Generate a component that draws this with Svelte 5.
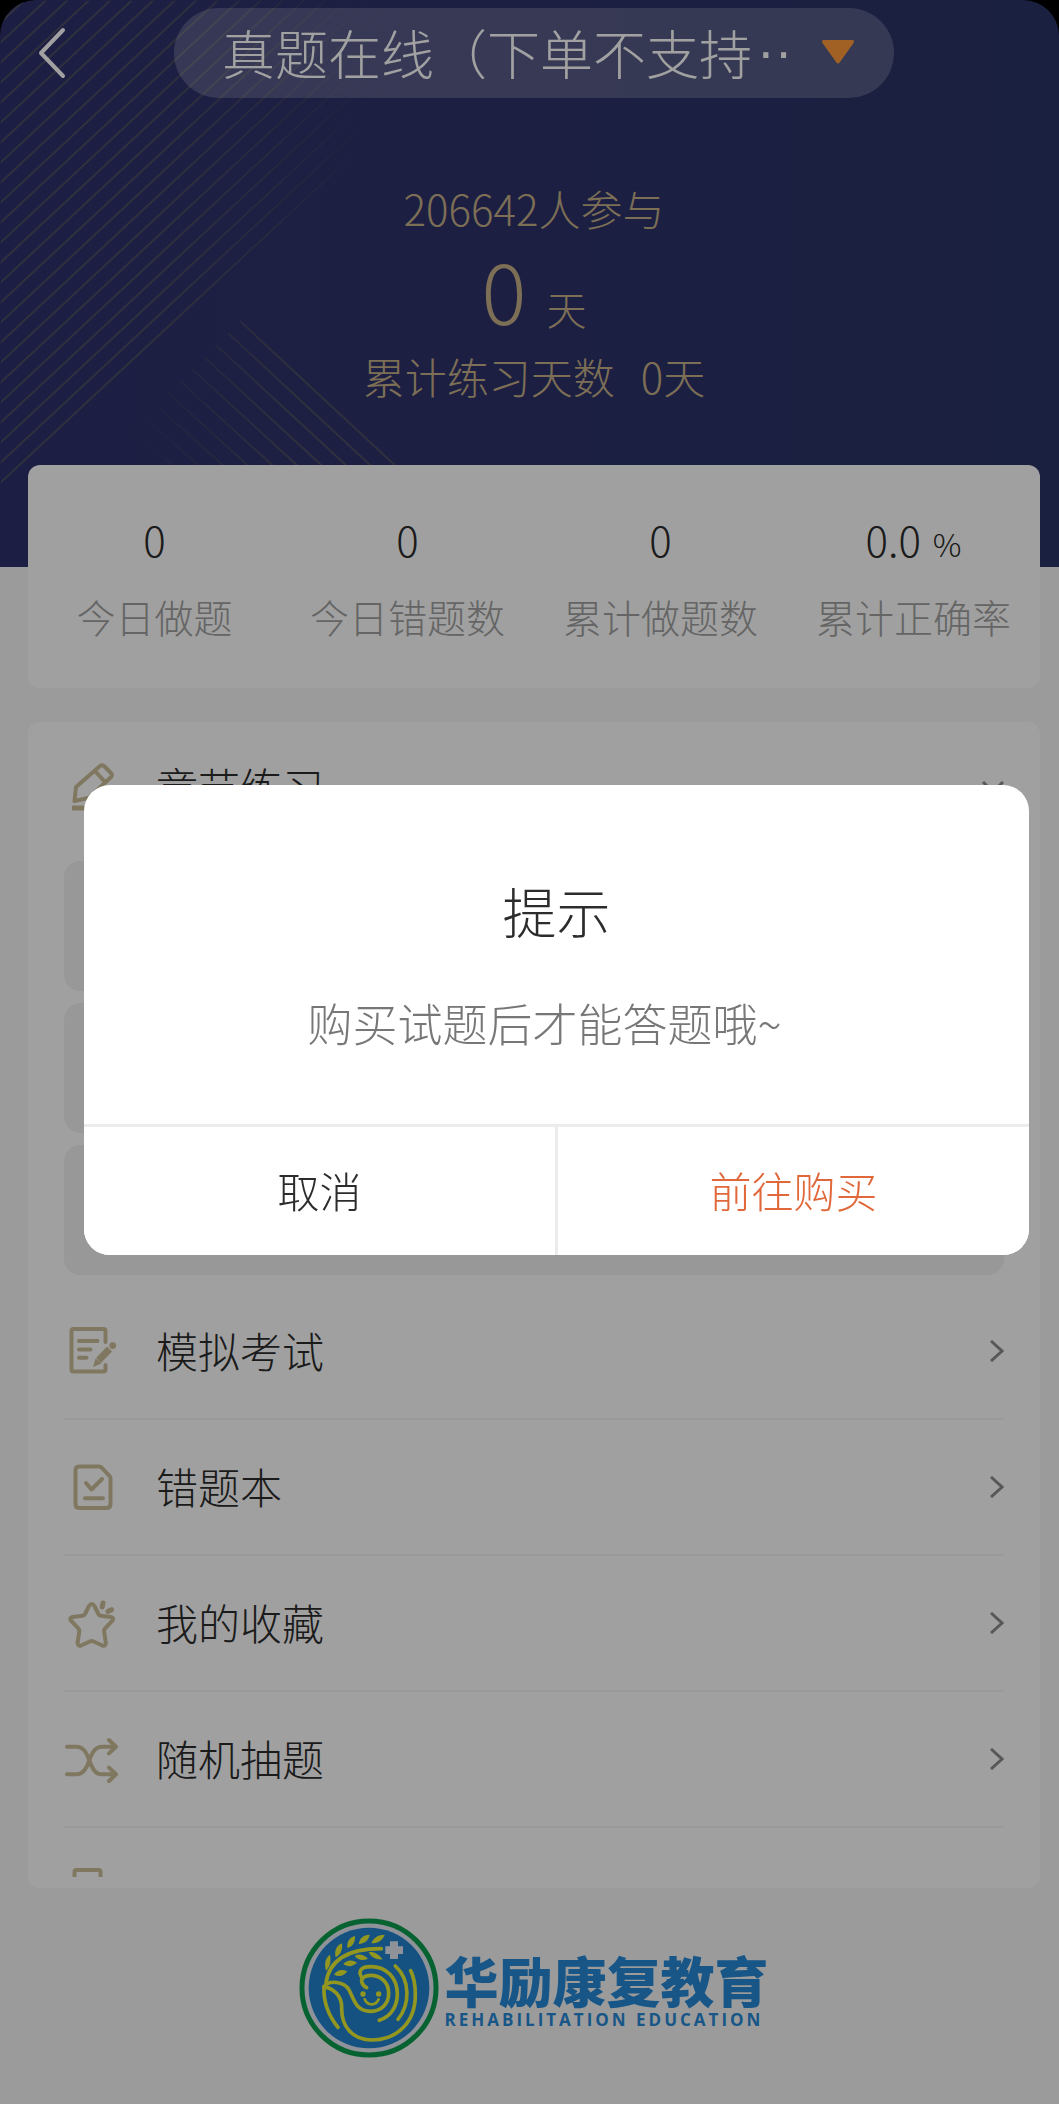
<script lang="ts">
  let open = $state(true);

  const stats = [
    { value: '0', unit: '', label: '今日做题' },
    { value: '0', unit: '', label: '今日错题数' },
    { value: '0', unit: '', label: '累计做题数' },
    { value: '0.0', unit: '%', label: '累计正确率' }
  ];

  const menu = [
    { id: 'exam', label: '模拟考试' },
    { id: 'wrong', label: '错题本' },
    { id: 'star', label: '我的收藏' },
    { id: 'random', label: '随机抽题' }
  ];

  const chapters = [1, 2, 3];
  const rising = Array.from({ length: 24 }, (_, i) => 23 + i * 20);
  const falling = Array.from({ length: 10 }, (_, i) => i);
</script>

{#snippet icon(id: string)}
  <svg class="icon" viewBox="0 0 56 56" aria-hidden="true">
    {#if id === 'chapter'}
      <path d="M12 27 36 6q2-1.500 4 0l7 7q2 2 0 4L27 36q-2 2-5 2.500L10.500 41z" />
      <path d="m31 11 10 11" />
      <path d="M8 48h41" stroke-width="5" stroke-linecap="butt" />
    {:else if id === 'exam'}
      <path d="M41.500 19V8q0-2-2-2h-30q-2 0-2 2v38.500q0 2 2 2h30q2 0 2-2V42" />
      <path d="M15 18h18.500M15 26.500h11.500M15 34.700h7.500" />
      <path d="m34.500 37.500 11-11.500" stroke-width="7" stroke-linecap="butt" />
      <path class="solid" d="M31.500 35.500 37.500 40.500l-8.500 3.500z" stroke="none" />
      <circle class="solid" cx="48.700" cy="22.600" r="3.400" stroke="none" />
    {:else if id === 'wrong'}
      <path d="M15 7.500h20q1.500 0 2.500 1l8 8.500q1 1 1 2.500V45q0 4-4 4h-27q-4 0-4-4V11.500q0-4 3.500-4z" />
      <path d="m22 24 5.500 6.500L38 20M21 39.300h18" />
    {:else if id === 'star'}
      <path d="M25 11q2.700-4 5.400 0l4 8q.8 1.500 2.500 1.700l10 1.300q3.500 1 1.500 3.700l-7.500 8q-1 1-.8 2.500l1.700 11.500q0 4-3.500 2.800l-9.200-4.200q-1.400-.6-2.800 0l-9.200 4.200q-3.500 1-3.500-2.800l1.700-11.500q.2-1.500-.8-2.500l-7.500-8q-2-2.700 1.500-3.700l10-1.300q1.700-.2 2.500-1.700z" />
      <path d="m39 8-.8 4M44 16.500l3.500-1.800" stroke-width="5" />
    {:else if id === 'random'}
      <path d="M3 15.700h9.500C20 15.700 23 23 25.300 29.300 28 37 31 43.300 38 43.300h13M3 43.300h9.500C20 43.300 23 36 25.300 29.300 28 22 31 15.700 38 15.700h13" />
      <path d="m45 9 7 6.700-7 6.700M45 36.600l7 6.700-7 6.700" />
    {:else}
      <path d="M10.500 30V5q0-2 2-2h22q2 0 2 2v25" />
    {/if}
  </svg>
{/snippet}

<div class="page">
  <div class="top">
    <header>
      <svg class="lines" viewBox="0 0 420 567" aria-hidden="true">
        <defs>
          <linearGradient id="fade" x1="0" x2="1" y1="0" y2="0">
            <stop offset="0.400" stop-color="#fff" />
            <stop offset="0.920" stop-color="#fff" stop-opacity="0" />
          </linearGradient>
          <linearGradient id="fadeBack" x1="0" x2="1" y1="0" y2="0">
            <stop offset="0.300" stop-color="#fff" stop-opacity="0" />
            <stop offset="0.700" stop-color="#fff" />
          </linearGradient>
          <mask id="left"><rect width="420" height="567" fill="url(#fade)" /></mask>
          <mask id="right"><rect width="420" height="567" fill="url(#fadeBack)" /></mask>
        </defs>
        <g mask="url(#left)">
          {#each rising as y}
            <path d="M0 {y}L{y / 0.93} 0" />
          {/each}
        </g>
        <g mask="url(#right)">
          {#each falling as i}
            <path d="M{240 - i * 12} {321 + i * 12}L{504 - i * 24} 567" />
          {/each}
        </g>
      </svg>

      <div class="bar">
        <button class="back" aria-label="返回">
          <svg viewBox="0 0 28 52" aria-hidden="true"><path d="M25 3 3 26l22 23" /></svg>
        </button>
        <button class="course">
          <span>真题在线（下单不支持</span>
          <span class="dots">··</span>
          <svg viewBox="0 0 32 24" aria-hidden="true"><path d="M2 0h28q3 0 1.500 3L18 22q-2 3-4 0L.5 3Q-1 0 2 0z" /></svg>
        </button>
      </div>

      <p class="joined">206642人参与</p>
      <p class="days"><strong>0</strong><span>天</span></p>
      <p class="total"><span>累计练习天数</span><span>0天</span></p>
    </header>
  </div>

  <main>
    <section class="card stats">
      {#each stats as s}
        <div class="stat">
          <div class="value">{s.value}{#if s.unit}<small>{s.unit}</small>{/if}</div>
          <div class="label">{s.label}</div>
        </div>
      {/each}
    </section>

    <section class="card list">
      <div class="scroll">
        <button class="row first">
          {@render icon('chapter')}
          <span>章节练习</span>
          <svg class="chev down" viewBox="0 0 22 14" aria-hidden="true"><path d="m1 1 10 10L21 1" /></svg>
        </button>
        <div class="chapters">
          {#each chapters as c (c)}
            <div class="chapter"></div>
          {/each}
        </div>
        {#each menu as m (m.id)}
          <button class="row">
            {@render icon(m.id)}
            <span>{m.label}</span>
            <svg class="chev" viewBox="0 0 14 22" aria-hidden="true"><path d="m1 1 11 10L1 21" /></svg>
          </button>
        {/each}
        <div class="peek">{@render icon('more')}</div>
      </div>
    </section>
  </main>

  <footer>
    <svg class="emblem" viewBox="25 26 420 420" aria-hidden="true">
      <circle cx="235" cy="236" r="201" fill="#e4e8f4" stroke="#0c9c50" stroke-width="15" />
      <circle cx="235" cy="236" r="181" fill="#2283ce" />
      <path d="M298 96h24v15h15v23h-15v15h-24v-15h-14v-23h14z" fill="#e4e8f4" />
      <g fill="none" stroke="#eaf032" stroke-width="11" stroke-linecap="round" stroke-linejoin="round">
        <path d="M106 222C114 160 160 118 272 118" />
        <path d="M142 354C108 312 98 272 100 232 116 210 160 218 174 240 190 268 194 306 240 306 274 306 294 282 294 252 294 216 268 198 240 198 220 198 212 208 213 216 215 228 222 232 228 235" />
        <path d="M213 204C201 184 212 172 240 172 288 172 320 206 320 254 320 292 300 322 266 333" />
        <path d="M100 232C128 238 154 258 153 296 152 352 186 392 244 392 318 392 374 340 374 256 374 228 370 204 360 184" />
        <path d="M314 170C360 212 358 286 322 330" />
        <path d="M222 270C230 290 256 290 264 270" stroke-width="8" />
      </g>
      <g fill="#eaf032">
        <circle cx="217" cy="254" r="8" />
        <circle cx="264" cy="254" r="8" />
        <path d="M106 184C100 162 104 146 118 136 122 156 118 172 106 184z" />
        <path d="M135 144C130 124 138 108 154 102 156 122 150 136 135 144z" />
        <path d="M170 116C168 98 176 84 193 80 194 98 186 112 170 116z" />
        <path d="M204 104C206 88 218 76 237 76 234 92 224 102 204 104z" />
        <path d="M242 102C248 86 262 76 282 76 276 92 264 102 242 102z" />
        <path d="M130 196C138 182 154 178 170 186 160 200 146 204 130 196z" />
        <path d="M158 164C168 152 184 150 199 160 186 172 172 174 158 164z" />
        <path d="M192 140C204 132 218 136 232 148 216 156 202 152 192 140z" />
        <path d="M234 128C250 126 264 134 276 150 256 152 242 144 234 128z" />
      </g>
    </svg>
    <div class="brand">
      <div class="name">华励康复教育</div>
      <div class="latin">REHABILITATION EDUCATION</div>
    </div>
  </footer>

  {#if open}
    <div class="mask">
      <div class="dialog" role="dialog" aria-modal="true" aria-labelledby="tip">
        <h2 id="tip">提示</h2>
        <p>购买试题后才能答题哦~</p>
        <div class="actions">
          <button onclick={() => (open = false)}>取消</button>
          <button class="buy">前往购买</button>
        </div>
      </div>
    </div>
  {/if}
</div>

<style>
  :global(body) {
    margin: 0;
    background: #f6f6f6;
  }
  .page {
    font-family: 'Noto Sans CJK SC', sans-serif;
    font-weight: 300;
    font-size: 42px;
    line-height: 60px;
    color: #2c2c2c;
  }
  button {
    font: inherit;
    color: inherit;
    border: 0;
    padding: 0;
    background: none;
    cursor: pointer;
  }
  p,
  h2 {
    margin: 0;
    font-weight: inherit;
  }
  svg {
    display: block;
    flex: none;
    fill: none;
  }

  .top {
    background: #000;
  }
  header {
    position: relative;
    overflow: hidden;
    padding: 8px 19px 161px 28px;
    border-radius: 36px 36px 0 0;
    background: linear-gradient(90deg, #2f306b, #2d3269 50%, #2a3365);
    color: #c4b088;
    text-align: center;
  }
  .lines {
    position: absolute;
    left: 0;
    top: 0;
    width: 420px;
    height: 567px;
    stroke: #4c4e62;
    stroke-width: 2;
  }
  .bar {
    position: relative;
    display: grid;
    grid-template-columns: 146px 1fr 146px;
    align-items: center;
  }
  .back svg {
    width: 28px;
    height: 52px;
    margin-left: 10px;
    stroke: #fff;
    stroke-width: 4;
    stroke-linecap: round;
    stroke-linejoin: round;
  }
  .course {
    display: flex;
    align-items: center;
    height: 90px;
    padding: 0 40px 2px 48px;
    border-radius: 45px;
    background: rgba(255, 255, 255, 0.2);
    color: #fff;
    font-size: 53px;
    white-space: nowrap;
  }
  .dots {
    margin-left: 5px;
    font-family: 'Liberation Sans', sans-serif;
  }
  .course svg {
    width: 32px;
    height: 24px;
    margin-left: auto;
    fill: #ff9a3c;
  }
  .joined {
    position: relative;
    margin-top: 80px;
  }
  .days {
    position: relative;
    display: flex;
    justify-content: center;
    align-items: baseline;
    gap: 20px;
    height: 108px;
    line-height: 102px;
  }
  .days strong {
    font-size: 84px;
    font-weight: 300;
  }
  .days span {
    font-size: 40px;
  }
  .total {
    position: relative;
    display: flex;
    justify-content: center;
    gap: 26px;
  }

  main {
    position: relative;
    margin-top: -102px;
    padding: 0 19px 0 28px;
  }
  .card {
    border-radius: 12px;
    background: #fefefe;
  }
  .stats {
    display: grid;
    grid-template-columns: repeat(4, 1fr);
    padding: 44px 0 42px;
    text-align: center;
  }
  .stat .label {
    margin-top: 17px;
    font-size: 39px;
    color: #a0a0a0;
    white-space: nowrap;
  }
  small {
    margin-left: 12px;
    font-size: 32px;
    line-height: 1;
  }
  .list {
    margin-top: 34px;
    padding: 0 36px 11px;
  }
  .scroll {
    overflow: hidden;
  }
  .row {
    display: flex;
    align-items: center;
    box-sizing: border-box;
    width: 100%;
    height: 136px;
    border-bottom: 2px solid #f3f3f3;
    text-align: left;
  }
  .row span {
    flex: 1;
    margin-left: 36px;
    padding-bottom: 3px;
  }
  .first {
    height: 131px;
    border-bottom: 0;
  }
  .icon {
    width: 56px;
    height: 56px;
    stroke: #cabd97;
    stroke-width: 4;
    stroke-linecap: round;
    stroke-linejoin: round;
  }
  .solid {
    fill: #cabd97;
  }
  .chev {
    width: 14px;
    height: 22px;
    stroke: #8c8c8c;
    stroke-width: 3;
  }
  .chev.down {
    width: 22px;
    height: 14px;
  }
  .chapters {
    display: grid;
    gap: 12px;
    padding: 8px 0 9px;
  }
  .chapter {
    height: 130px;
    border-radius: 16px;
    background: #f1f1f1;
  }
  .peek {
    height: 10px;
    padding-top: 39px;
    overflow: hidden;
  }

  footer {
    display: flex;
    justify-content: center;
    align-items: center;
    gap: 6px;
    padding: 30px 0 45px 8px;
    color: #2789d6;
  }
  .emblem {
    width: 140px;
    height: 140px;
  }
  .brand {
    padding-top: 4px;
  }
  .name {
    font-size: 54px;
    font-weight: 900;
    line-height: 60px;
  }
  .latin {
    font-family: 'Open Sans', sans-serif;
    font-size: 17px;
    font-weight: 700;
    line-height: 20px;
    letter-spacing: 3px;
    white-space: nowrap;
  }

  .mask {
    position: fixed;
    inset: 0;
    display: flex;
    align-items: center;
    padding: 0 30px 64px 84px;
    background: rgba(0, 0, 0, 0.37);
  }
  .dialog {
    flex: 1;
    overflow: hidden;
    border-radius: 26px;
    background: #fff;
    text-align: center;
  }
  h2 {
    margin-top: 86px;
    font-size: 54px;
    line-height: 80px;
  }
  .dialog p {
    margin: 41px 24px 70px 0;
    font-size: 45px;
    line-height: 62px;
    color: #777;
  }
  .actions {
    display: grid;
    grid-template-columns: 1fr 1fr;
    gap: 3px;
    border-top: 3px solid #ececec;
    background: #ececec;
  }
  .actions button {
    height: 128px;
    padding-bottom: 2px;
    background: #fff;
  }
  .actions .buy {
    color: #e0683a;
  }
</style>
